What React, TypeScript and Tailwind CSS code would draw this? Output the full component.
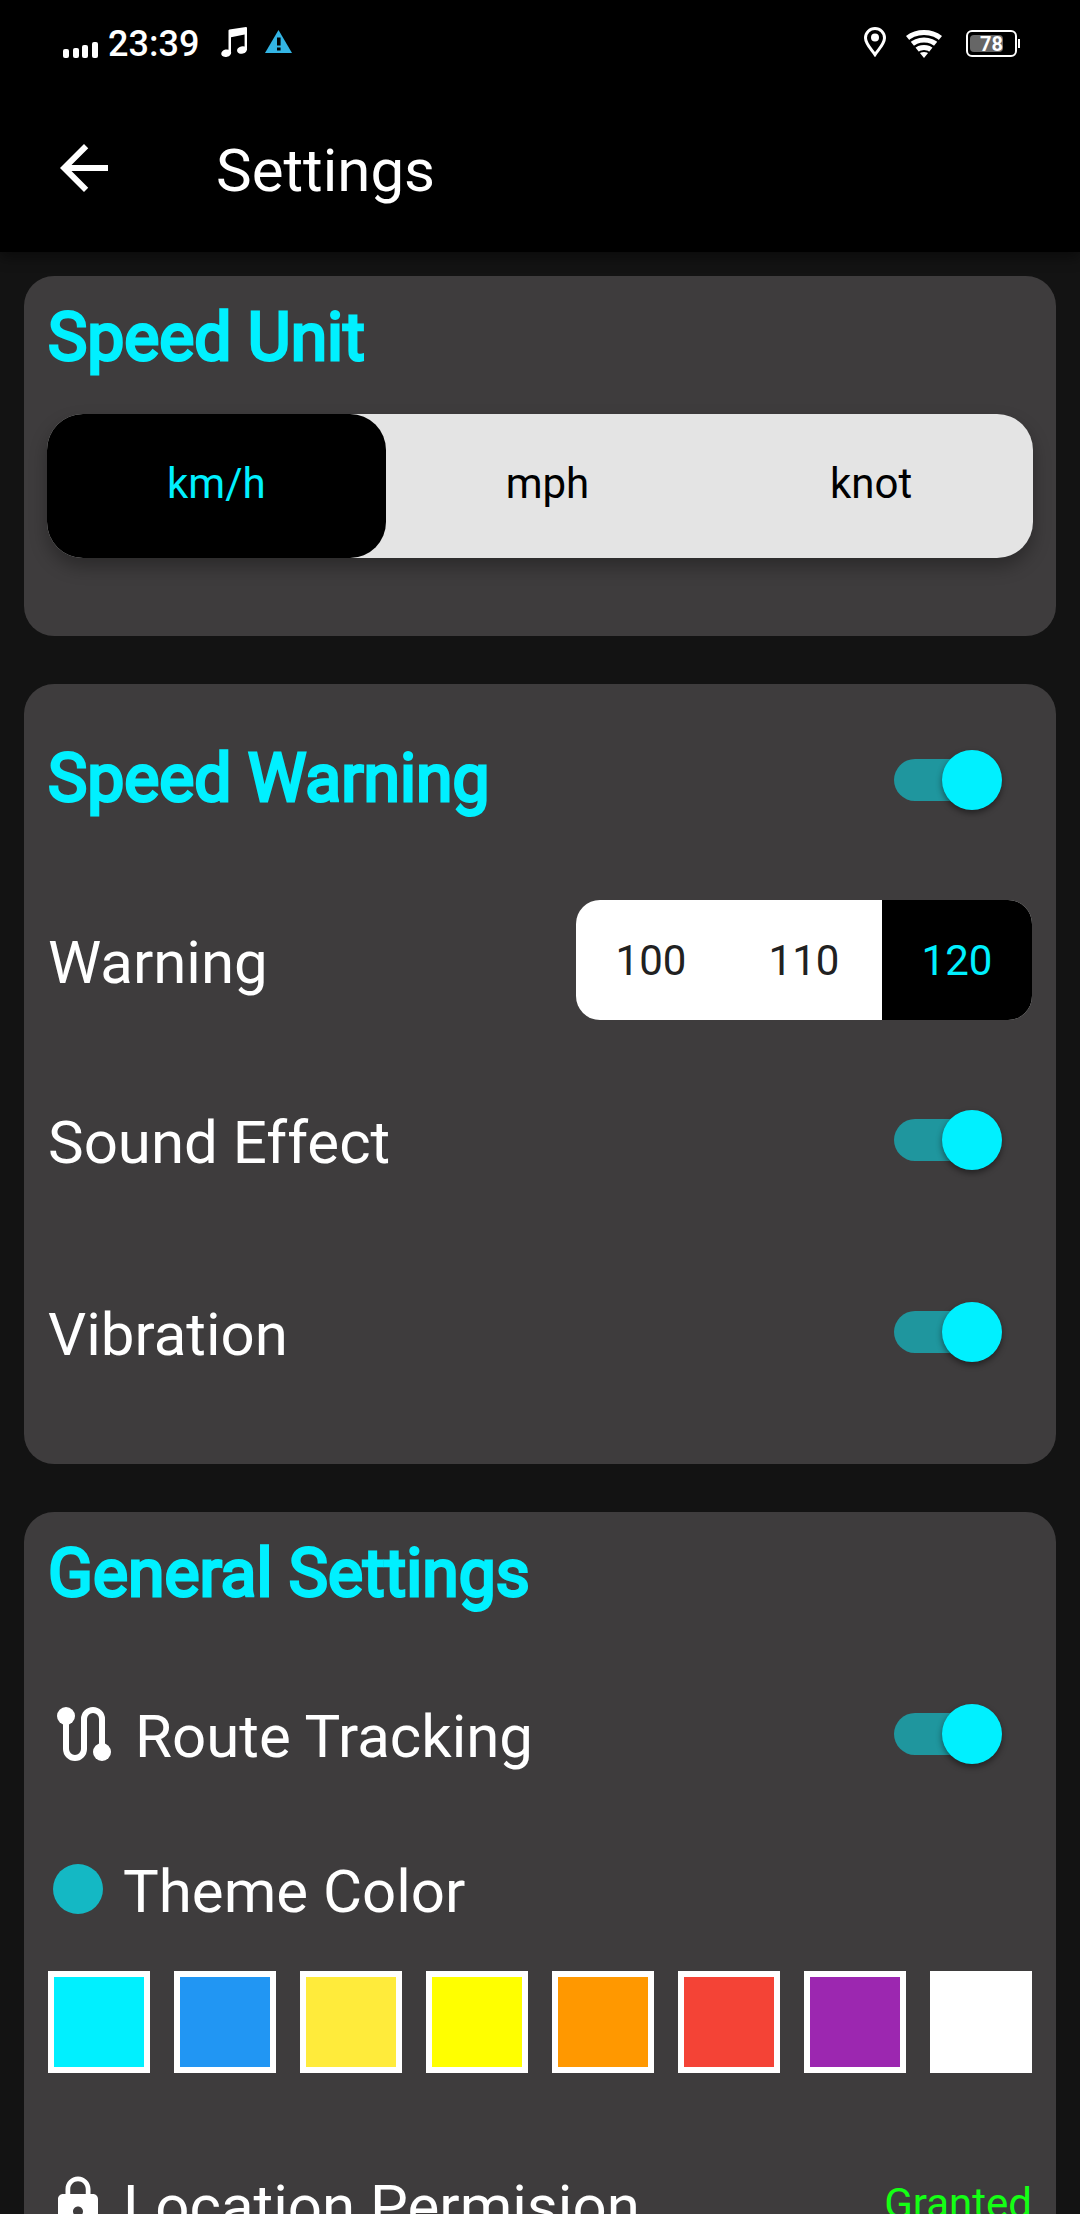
import { useState } from "react";
import type { ReactNode } from "react";
import clsx from "clsx";
import { MdArrowBack, MdLock } from "react-icons/md";

const units = ["km/h", "mph", "knot"];
const limits = ["100", "110", "120"];

const themeColors = [
  { name: "Cyan", value: "bg-[#00f0ff]" },
  { name: "Blue", value: "bg-[#2196f3]" },
  { name: "Amber", value: "bg-[#ffeb3b]" },
  { name: "Yellow", value: "bg-[#ffff00]" },
  { name: "Orange", value: "bg-[#ff9800]" },
  { name: "Red", value: "bg-[#f44336]" },
  { name: "Purple", value: "bg-[#9c27b0]" },
  { name: "White", value: "bg-white" },
];

function StatusBar() {
  return (
    <div className="flex items-center h-[87px] pl-[63px] pr-[60px] text-white">
      <svg width="35" height="16" viewBox="0 0 35 16" fill="currentColor" className="mt-3">
        <rect x="0" y="7" width="6" height="9" rx="2" />
        <rect x="10" y="6" width="6" height="10" rx="2" />
        <rect x="19" y="3" width="6" height="13" rx="2" />
        <rect x="29" y="0" width="6" height="16" rx="2" />
      </svg>
      <span className="ml-[10px] text-[36px] leading-[44px] font-medium">23:39</span>
      <svg width="26" height="30" viewBox="0 0 26 30" fill="currentColor" className="ml-[22px] -mt-1">
        <path d="M7.5 3.6Q7.5 2.8 8.4 2.5L25 0Q26 0 26 1V23H23.6V7.4L10 10.2V27H7.5Z" />
        <ellipse cx="5.2" cy="26.2" rx="5" ry="3.7" transform="rotate(-14 5.2 26.2)" />
        <ellipse cx="21" cy="23" rx="5" ry="3.7" transform="rotate(-14 21 23)" />
      </svg>
      <svg width="27" height="23" viewBox="0 0 27 23" className="ml-[18px] -mt-1">
        <path d="M13.5 0L27 23H0Z" fill="#33b5e5" />
        <path d="M12 7.5h3.6v8H12zM12 17.5h3.6v3H12z" fill="#000" />
      </svg>

      <div className="flex items-center ml-auto">
        <svg width="22" height="30" viewBox="0 0 22 30" className="-mt-1">
          <path
            d="M11 27.6C8 23 1.5 17 1.5 11a9.5 9.5 0 0 1 19 0c0 6-6.5 12-9.5 16.6z"
            fill="none"
            stroke="currentColor"
            strokeWidth="3"
          />
          <circle cx="11" cy="10.5" r="4" fill="currentColor" />
        </svg>
        <svg width="36" height="28" viewBox="0 0 36 28" className="ml-5">
          <clipPath id="wifi-fan">
            <path d="M18 28L-4 1V-2H40V1Z" />
          </clipPath>
          <g clipPath="url(#wifi-fan)" fill="none" stroke="currentColor" strokeWidth="5">
            <circle cx="18" cy="30" r="27.5" />
            <circle cx="18" cy="30" r="20" />
            <circle cx="18" cy="30" r="12.5" />
            <circle cx="18" cy="30" r="4" strokeWidth="8" />
          </g>
        </svg>
        <div className="relative ml-6 flex w-[51px] h-[27px] items-center justify-center rounded-md border-2 border-white">
          <span className="absolute left-[2px] top-[3px] h-[17px] w-[33px] rounded-sm bg-[#666]" />
          <span className="relative text-[20px] leading-[22px] font-bold">78</span>
        </div>
        <span className="ml-px h-[9px] w-[2px] bg-white" />
      </div>
    </div>
  );
}

function Card({ className, children }: { className?: string; children: ReactNode }) {
  return <section className={clsx("rounded-[30px] bg-[#3e3c3d] px-6", className)}>{children}</section>;
}

function CardTitle({ children }: { children: ReactNode }) {
  return (
    <h2 className="pb-[2px] text-[66px] leading-[76px] text-[#00f0ff] [-webkit-text-stroke:3px_#00f0ff]">
      {children}
    </h2>
  );
}

function Switch({ id }: { id: string }) {
  const [on, setOn] = useState(true);
  return (
    <input
      id={id}
      type="checkbox"
      role="switch"
      checked={on}
      onChange={(e) => setOn(e.target.checked)}
      className={clsx(
        "relative mr-[39px] h-[42px] w-[99px] shrink-0 appearance-none rounded-full",
        "before:absolute before:-top-[9px] before:size-[60px] before:rounded-full before:shadow-[0_3px_6px_rgba(0,0,0,0.45)]",
        on ? "bg-[#1f969e] before:-right-[9px] before:bg-[#00f0ff]" : "bg-[#6b6b6b] before:-left-[9px] before:bg-[#bdbdbd]"
      )}
    />
  );
}

function RouteIcon() {
  return (
    <svg width="72" height="72" viewBox="0 0 72 72" className="shrink-0">
      <path
        d="M18 18V51a9 9 0 0 0 18 0V21a9 9 0 0 1 18 0V54"
        fill="none"
        stroke="#fff"
        strokeWidth="6"
      />
      <circle cx="18" cy="18" r="9" fill="#fff" />
      <circle cx="54" cy="54" r="9" fill="#fff" />
    </svg>
  );
}

export default function App() {
  const [unit, setUnit] = useState("km/h");
  const [limit, setLimit] = useState("120");
  const [, setTheme] = useState("Cyan");

  return (
    <div className="flex h-screen flex-col bg-[#131313] font-[Roboto,sans-serif] text-white">
      <header className="relative shrink-0 bg-black pb-12 shadow-[0_6px_12px_rgba(0,0,0,0.4)]">
        <StatusBar />
        <div className="flex items-center pl-12 pt-[45px]">
          <button type="button" aria-label="Back" className="size-[72px]">
            <MdArrowBack className="size-[72px]" />
          </button>
          <h1 className="ml-24 pt-1.5 text-[60px] leading-[66px]">Settings</h1>
        </div>
      </header>

      <main className="flex-1 space-y-12 overflow-y-auto px-6 pt-6 [scrollbar-width:none]">
        {/* Speed unit */}
        <Card className="pt-6 pb-[78px]">
          <CardTitle>Speed Unit</CardTitle>
          <div
            role="radiogroup"
            aria-label="Speed Unit"
            className="-mx-px mt-9 grid h-36 grid-cols-[339fr_324fr_324fr] rounded-[36px] bg-[#e4e4e4] shadow-[0_9px_18px_rgba(0,0,0,0.3)]"
          >
            {units.map((u) => (
              <label
                key={u}
                className={clsx(
                  "relative flex items-center justify-center rounded-[36px] pb-1 text-[42px] leading-[50px]",
                  u === unit ? "bg-black text-[#00f0ff]" : "text-black"
                )}
              >
                <input
                  type="radio"
                  name="unit"
                  checked={u === unit}
                  onChange={() => setUnit(u)}
                  className="sr-only"
                />
                {u}
              </label>
            ))}
          </div>
        </Card>

        {/* Speed warning */}
        <Card className="pb-9">
          <div className="flex h-48 items-center justify-between">
            <CardTitle>
              <label htmlFor="speed-warning">Speed Warning</label>
            </CardTitle>
            <Switch id="speed-warning" />
          </div>
          <div className="flex h-[168px] items-center justify-between">
            <span className="pt-1.5 text-[60px] leading-[72px]">Warning</span>
            <div role="radiogroup" aria-label="Warning" className="flex h-[120px] overflow-hidden rounded-3xl bg-white">
              {limits.map((l) => (
                <label
                  key={l}
                  className={clsx(
                    "relative flex w-[153px] items-center justify-center pt-[2px] pr-[3px] text-[42px] leading-[50px] last:w-[150px] last:pr-0",
                    l === limit ? "bg-black text-[#00f0ff]" : "text-[#212121]"
                  )}
                >
                  <input
                    type="radio"
                    name="limit"
                    checked={l === limit}
                    onChange={() => setLimit(l)}
                    className="sr-only"
                  />
                  {l}
                </label>
              ))}
            </div>
          </div>
          <div className="flex h-48 items-center justify-between">
            <label htmlFor="sound" className="pt-1.5 text-[60px] leading-[72px]">Sound Effect</label>
            <Switch id="sound" />
          </div>
          <div className="flex h-48 items-center justify-between">
            <label htmlFor="vibration" className="pt-1.5 text-[60px] leading-[72px]">Vibration</label>
            <Switch id="vibration" />
          </div>
        </Card>

        {/* General settings */}
        <Card className="pt-6 pb-9">
          <CardTitle>General Settings</CardTitle>
          <div className="mt-6 flex h-48 items-center">
            <RouteIcon />
            <label htmlFor="route" className="ml-[15px] flex-1 pt-1.5 text-[60px] leading-[72px]">Route Tracking</label>
            <Switch id="route" />
          </div>
          <div className="flex h-[118px] items-center">
            <span className="ml-[5px] size-[50px] rounded-full bg-[#14b8c4]" />
            <span className="ml-5 pt-1.5 text-[60px] leading-[72px]">Theme Color</span>
          </div>
          <div className="mt-[23px] flex justify-between">
            {themeColors.map((c) => (
              <button
                key={c.name}
                type="button"
                aria-label={c.name}
                onClick={() => setTheme(c.name)}
                className={clsx("size-[102px] border-6 border-white", c.value)}
              />
            ))}
          </div>
          <div className="mt-[59px] flex h-36 items-center">
            <MdLock className="size-[60px] shrink-0" />
            <span className="ml-[15px] flex-1 pt-1.5 text-[60px] leading-[72px]">Location Permision</span>
            <span className="text-[42px] leading-[50px] text-[#14ff14]">Granted</span>
          </div>
        </Card>
      </main>
    </div>
  );
}
